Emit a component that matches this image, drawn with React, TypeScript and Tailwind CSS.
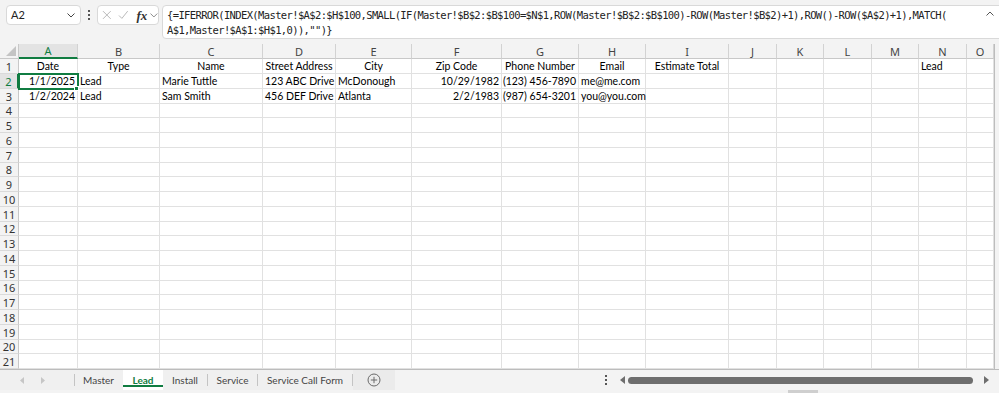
import React from 'react';

const COLS = [
  { l: 'A', w: 'w-[59px]' },
  { l: 'B', w: 'w-[82px]' },
  { l: 'C', w: 'w-[103px]' },
  { l: 'D', w: 'w-[73px]' },
  { l: 'E', w: 'w-[76px]' },
  { l: 'F', w: 'w-[90px]' },
  { l: 'G', w: 'w-[77px]' },
  { l: 'H', w: 'w-[67px]' },
  { l: 'I', w: 'w-[83px]' },
  { l: 'J', w: 'w-[48px]' },
  { l: 'K', w: 'w-[47px]' },
  { l: 'L', w: 'w-[48px]' },
  { l: 'M', w: 'w-[47px]' },
  { l: 'N', w: 'w-[48px]' },
  { l: 'O', w: 'w-[27px]' },
];

type Cell = { t: string; a: 'l' | 'c' | 'r' };

const DATA: Record<number, Record<string, Cell>> = {
  1: {
    A: { t: 'Date', a: 'c' },
    B: { t: 'Type', a: 'c' },
    C: { t: 'Name', a: 'c' },
    D: { t: 'Street Address', a: 'c' },
    E: { t: 'City', a: 'c' },
    F: { t: 'Zip Code', a: 'c' },
    G: { t: 'Phone Number', a: 'c' },
    H: { t: 'Email', a: 'c' },
    I: { t: 'Estimate Total', a: 'c' },
    N: { t: 'Lead', a: 'l' },
  },
  2: {
    A: { t: '1/1/2025', a: 'r' },
    B: { t: 'Lead', a: 'l' },
    C: { t: 'Marie Tuttle', a: 'l' },
    D: { t: '123 ABC Drive', a: 'l' },
    E: { t: 'McDonough', a: 'l' },
    F: { t: '10/29/1982', a: 'r' },
    G: { t: '(123) 456-7890', a: 'r' },
    H: { t: 'me@me.com', a: 'l' },
  },
  3: {
    A: { t: '1/2/2024', a: 'r' },
    B: { t: 'Lead', a: 'l' },
    C: { t: 'Sam Smith', a: 'l' },
    D: { t: '456 DEF Drive', a: 'l' },
    E: { t: 'Atlanta', a: 'l' },
    F: { t: '2/2/1983', a: 'r' },
    G: { t: '(987) 654-3201', a: 'r' },
    H: { t: 'you@you.com', a: 'l' },
  },
};

const ALIGN = { l: 'justify-start', c: 'justify-center', r: 'justify-end' };

const ROWS = Array.from({ length: 21 }, (_, i) => i + 1);

const cellFont = { fontFamily: 'Lato, "Liberation Sans", sans-serif' };

function ChevronDown({ className }: { className?: string }) {
  return (
    <svg className={className} width="8" height="5" viewBox="0 0 8 5" fill="none">
      <path d="M0.5 0.5 L4 4 L7.5 0.5" stroke="currentColor" strokeWidth="1" />
    </svg>
  );
}

function FormulaBar() {
  return (
    <div className="h-[44px] bg-[#f3f3f3] flex items-start pt-[5px] overflow-hidden font-['Lato','Liberation_Sans',sans-serif]">
      <div className="ml-[6px] w-[75px] h-[20px] shrink-0 bg-white border border-[#d9d9d9] rounded-[4px] flex items-center pl-[4px] pr-[5px] text-[11px] text-[#222]">
        <span className="flex-1">A2</span>
        <ChevronDown className="text-[#444]" />
      </div>
      <div className="w-[16px] h-[20px] shrink-0 flex flex-col items-center justify-center gap-[2px]">
        <div className="w-[2px] h-[2px] bg-[#555]" />
        <div className="w-[2px] h-[2px] bg-[#555]" />
        <div className="w-[2px] h-[2px] bg-[#555]" />
      </div>
      <div className="w-[62px] h-[20px] shrink-0 bg-white border border-[#d9d9d9] rounded-[4px] flex items-center pl-[4px] gap-[6px]">
        <svg width="10" height="10" viewBox="0 0 10 10" fill="none">
          <path d="M1 1 L9 9 M9 1 L1 9" stroke="#b8b8b8" strokeWidth="1" />
        </svg>
        <svg width="11" height="10" viewBox="0 0 11 10" fill="none">
          <path d="M1 5.5 L4 8.5 L10 1" stroke="#b8b8b8" strokeWidth="1" />
        </svg>
        <span className="font-['Liberation_Serif',serif] italic font-bold text-[13px] leading-none text-[#333] ml-[2px]">fx</span>
        <ChevronDown className="text-[#888] -ml-[3px]" />
      </div>
      <div className="ml-[3px] w-[842px] h-[34px] shrink-0 bg-white border border-[#d9d9d9] rounded-[4px] flex">
        <div className="flex-1 pl-[4px] pt-[2px] font-['DejaVu_Sans_Mono',monospace] text-[10.5px] leading-[15px] tracking-[-0.63px] text-[#222] whitespace-pre">
          <div>{'{=IFERROR(INDEX(Master!$A$2:$H$100,SMALL(IF(Master!$B$2:$B$100=$N$1,ROW(Master!$B$2:$B$100)-ROW(Master!$B$2)+1),ROW()-ROW($A$2)+1),MATCH('}</div>
          <div>{'A$1,Master!$A$1:$H$1,0)),"")}'}</div>
        </div>
        <div className="w-[14px] pt-[5px] mr-[3px]">
          <svg width="8" height="5" viewBox="0 0 8 5" fill="none">
            <path d="M0.5 4.5 L4 1 L7.5 4.5" stroke="#555" strokeWidth="1" />
          </svg>
        </div>
      </div>
    </div>
  );
}

function HeaderRow() {
  return (
    <div className="flex h-[15px]">
      <div className="w-[19px] shrink-0 bg-[#f3f3f3] border-r border-b border-[#c8c8c8] relative">
        <svg className="absolute right-[2px] bottom-[2px]" width="10" height="10" viewBox="0 0 10 10">
          <path d="M10 0 L10 10 L0 10 Z" fill="#c4c4c4" />
        </svg>
      </div>
      {COLS.map((c) => {
        const sel = c.l === 'A';
        return (
          <div
            key={c.l}
            className={
              c.w +
              ' shrink-0 flex items-center justify-center text-[11px] leading-none border-r border-[#d2d2d2] ' +
              (sel
                ? 'bg-[#e3e3e3] text-[#107c41] border-b-2 border-b-[#107c41]'
                : 'bg-[#f3f3f3] text-[#444] border-b border-b-[#c8c8c8]')
            }
          >
            {c.l}
          </div>
        );
      })}
    </div>
  );
}

function BodyRow({ r, idx }: { r: number; idx: number }) {
  const h = idx % 4 === 3 ? 'h-[14px]' : 'h-[15px]';
  const rowSel = r === 2;
  const rowData = DATA[r] || {};
  return (
    <div className={'flex ' + h}>
      <div
        className={
          'w-[19px] shrink-0 flex items-center justify-center text-[11px] leading-none border-b border-[#dadada] ' +
          (rowSel
            ? 'bg-[#e3e3e3] text-[#107c41] border-r-2 border-r-[#107c41]'
            : 'bg-[#f3f3f3] text-[#333] border-r border-r-[#c8c8c8]')
        }
      >
        {r}
      </div>
      {COLS.map((c) => {
        const d = rowData[c.l];
        const isSel = r === 2 && c.l === 'A';
        return (
          <div
            key={c.l}
            className={
              c.w +
              ' shrink-0 flex items-center px-[2px] border-r border-b border-[#e1e1e1] text-[10.5px] leading-none text-black whitespace-nowrap relative ' +
              (d ? ALIGN[d.a] : '')
            }
            style={cellFont}
          >
            {d ? d.t : null}
            {isSel && (
              <>
                <div className="absolute -left-[1px] -top-[1px] w-[61px] h-[17px] border-2 border-[#107c41] z-10 pointer-events-none" />
                <div className="absolute -right-[2px] -bottom-[3px] w-[5px] h-[5px] bg-[#107c41] border border-white z-20" />
              </>
            )}
          </div>
        );
      })}
    </div>
  );
}

function Sep() {
  return <div className="w-px h-[12px] bg-[#c4c4c4] shrink-0" />;
}

function TabBar() {
  return (
    <div className="h-[21px] flex items-stretch bg-[#f0f0f0] border-t border-[#bcbcbc] text-[10px] text-[#444]" style={cellFont}>
      <div className="w-[74px] shrink-0 flex items-center">
        <svg className="ml-[20px]" width="4" height="7" viewBox="0 0 4 7">
          <path d="M4 0 L0 3.5 L4 7 Z" fill="#c6c6c6" />
        </svg>
        <svg className="ml-[17px]" width="4" height="7" viewBox="0 0 4 7">
          <path d="M0 0 L4 3.5 L0 7 Z" fill="#c6c6c6" />
        </svg>
      </div>
      <div className="flex items-center"><Sep /></div>
      <div className="w-[47px] shrink-0 flex items-center justify-center">Master</div>
      <div className="w-px shrink-0" />
      <div className="w-[40px] shrink-0 flex items-center justify-center bg-white font-bold text-[#107c41] relative">
        Lead
        <div className="absolute left-0 right-0 bottom-[3px] h-[2px] bg-[#107c41]" />
      </div>
      <div className="w-[44px] shrink-0 flex items-center justify-center">Install</div>
      <div className="flex items-center"><Sep /></div>
      <div className="w-[49px] shrink-0 flex items-center justify-center">Service</div>
      <div className="flex items-center"><Sep /></div>
      <div className="w-[94px] shrink-0 flex items-center justify-center">Service Call Form</div>
      <div className="flex items-center"><Sep /></div>
      <div className="w-[42px] shrink-0 flex items-center justify-center bg-[#ebebeb]">
        <svg width="14" height="14" viewBox="0 0 14 14" fill="none">
          <circle cx="7" cy="7" r="6" stroke="#6a6a6a" strokeWidth="1" />
          <path d="M7 3.8 V10.2 M3.8 7 H10.2" stroke="#6a6a6a" strokeWidth="1" />
        </svg>
      </div>
      <div className="flex-1 flex items-center bg-[#f3f3f3]">
        <div className="ml-[209px] w-[4px] flex flex-col items-center gap-[2px]">
          <div className="w-[2px] h-[2px] bg-[#555]" />
          <div className="w-[2px] h-[2px] bg-[#555]" />
          <div className="w-[2px] h-[2px] bg-[#555]" />
        </div>
        <svg className="ml-[12px]" width="5" height="8" viewBox="0 0 5 8">
          <path d="M5 0 L0 4 L5 8 Z" fill="#6e6e6e" />
        </svg>
        <div className="ml-[3px] w-[345px] h-[7px] rounded-full bg-[#6e6e6e]" />
        <svg className="ml-[11px]" width="5" height="8" viewBox="0 0 5 8">
          <path d="M0 0 L5 4 L0 8 Z" fill="#6e6e6e" />
        </svg>
      </div>
    </div>
  );
}

export default function App() {
  return (
    <div className="w-[999px] h-[393px] overflow-hidden bg-white select-none">
      <FormulaBar />
      <div className="flex">
        <div className="w-[994px] shrink-0">
          <HeaderRow />
          {ROWS.map((r, i) => (
            <BodyRow key={r} r={r} idx={i} />
          ))}
        </div>
        <div className="flex-1 bg-[#f3f3f3] border-l border-[#bdbdbd]" />
      </div>
      <TabBar />
      <div className="h-[3px] bg-[#f3f3f3] flex">
        <div className="ml-[788px] w-[30px] h-[3px] bg-[#cfcfcf]" />
      </div>
    </div>
  );
}
